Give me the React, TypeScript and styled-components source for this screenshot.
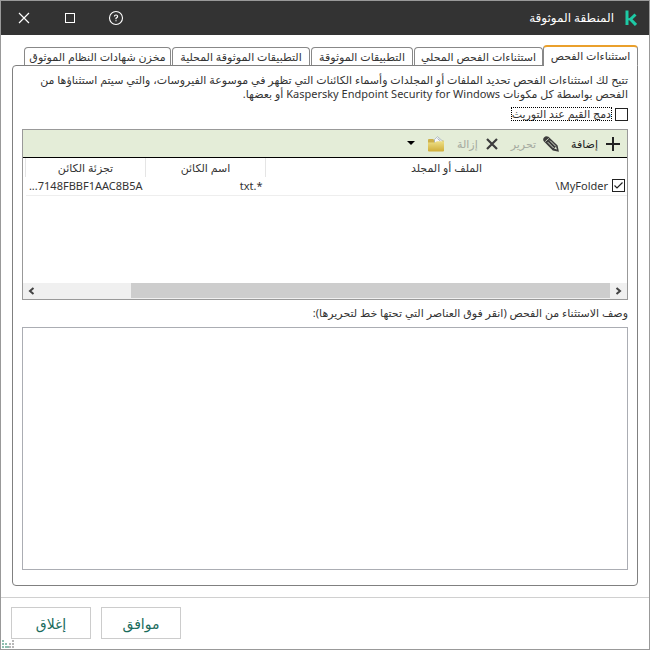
import React, { useState } from "react";
import styled, { createGlobalStyle } from "styled-components";

const GlobalStyle = createGlobalStyle`
  * { box-sizing: border-box; }
  body { margin: 0; background: #fff; }
  body, button, input, textarea, table {
    font-family: "Noto Sans", "DejaVu Sans", sans-serif;
    font-size: 11px;
    color: #333;
  }
  button { padding: 0; border: 0; background: none; cursor: pointer; }
`;

const Window = styled.div`
  position: relative;
  display: flex;
  flex-direction: column;
  min-height: 100vh;
  border: 1px solid #999;
  background: #fff;
`;

const TitleBar = styled.header`
  display: flex;
  align-items: center;
  height: 34px;
  padding: 0 12px 0 14px;
  background: #333;
  color: #fff;
`;

const Title = styled.h1`
  margin: 0;
  margin-inline: 11px auto;
  font-size: 12px;
  font-weight: 400;
  line-height: 18px;
`;

const WindowButtons = styled.div`
  display: flex;
  gap: 28px;
`;

const WindowButton = styled.button`
  display: flex;
  width: 18px;
  height: 18px;
`;

const Body = styled.main`
  display: flex;
  flex: 1;
  flex-direction: column;
  padding: 10px 11px 11px;
`;

const Tabs = styled.div`
  display: flex;
  align-items: flex-end;
  height: 20px;
`;

const Tab = styled.button<{ $active?: boolean; $basis: number }>`
  flex: 0 1 ${(p) => p.$basis}px;
  height: ${(p) => (p.$active ? 20 : 18)}px;
  margin-inline-end: ${(p) => (p.$active ? 0 : 1)}px;
  border: 1px solid #888;
  border-top: ${(p) => (p.$active ? "2px solid #eaa02c" : "1px solid #888")};
  border-bottom: 0;
  border-radius: 4px 4px 0 0;
  background: #fff;
  line-height: 16px;
  white-space: nowrap;
`;

const Panel = styled.section`
  position: relative;
  display: flex;
  flex: 1;
  flex-direction: column;
  padding: 7px 9px 15px;
  border: 1px solid #808080;
  border-radius: 4px;
  border-start-start-radius: 0;
  &::before {
    content: "";
    position: absolute;
    top: -1px;
    inset-inline-start: 0;
    width: 93px;
    height: 1px;
    background: #fff;
  }
`;

const Intro = styled.p`
  margin: 0;
  line-height: 14px;
`;

const CheckLabel = styled.label`
  display: flex;
  align-items: center;
  gap: 4px;
  height: 14px;
  margin: 6px 0 8px;
  span {
    outline: 1px dotted #000;
    line-height: 12px;
  }
`;

const Checkbox = styled.input.attrs({ type: "checkbox" })`
  appearance: none;
  display: block;
  flex: none;
  width: 13px;
  height: 13px;
  margin: 0;
  border: 1px solid #222;
  background: #fff;
  &:checked {
    background: #fff
      url("data:image/svg+xml,%3Csvg xmlns='http://www.w3.org/2000/svg' viewBox='0 0 11 11'%3E%3Cpath d='M1.5 5.5L4 8L9.5 2.5' fill='none' stroke='%23222' stroke-width='1.2'/%3E%3C/svg%3E");
  }
`;

const ListBox = styled.div`
  display: flex;
  flex-direction: column;
  height: 171px;
  border: 1px solid #999;
`;

const Toolbar = styled.div`
  display: flex;
  flex: none;
  align-items: center;
  gap: 12px;
  height: 28px;
  padding: 0 6px;
  border-bottom: 1px solid #000;
  background: #e4edd8;
`;

const Tool = styled.button`
  display: flex;
  align-items: center;
  gap: 7px;
  color: #222;
  line-height: 16px;
  &:disabled { color: #a5aaa0; }
  svg { display: block; flex: none; }
`;

const TableArea = styled.div`
  flex: 1;
  padding-inline-end: 2px;
`;

const Table = styled.table`
  width: 100%;
  border-collapse: collapse;
  table-layout: fixed;
`;

const HeadCell = styled.th<{ $width?: number }>`
  width: ${(p) => (p.$width ? `${p.$width}px` : "auto")};
  height: 19px;
  padding: 0;
  border-inline-end: 1px solid #e5e5e5;
  font-weight: 400;
  text-align: center;
`;

const Cell = styled.td`
  height: 18px;
  padding: 0 3px;
  border-bottom: 1px solid #eee;
  white-space: nowrap;
  &:first-child { padding-inline-start: 2px; }
`;

const RowLabel = styled.label`
  display: flex;
  align-items: center;
  gap: 4px;
  line-height: 16px;
`;

const ScrollBar = styled.div`
  display: flex;
  flex: none;
  height: 16px;
  background: #f0f0f0;
`;

const ScrollButton = styled.button`
  display: flex;
  align-items: center;
  justify-content: center;
  width: 17px;
`;

const ScrollTrack = styled.div`
  flex: 1;
`;

const ScrollThumb = styled.div`
  width: 84%;
  height: 15px;
  background: #cdcdcd;
`;

const DetailLabel = styled.label`
  margin: 5px 0 6px;
  line-height: 16px;
`;

const Detail = styled.textarea`
  flex: 1;
  width: 100%;
  border: 1px solid #abadb3;
  outline: 0;
  resize: none;
`;

const Footer = styled.footer`
  display: flex;
  justify-content: flex-end;
  gap: 10px;
  padding: 9px 10px 10px;
  border-top: 1px solid #d0d0d0;
`;

const FooterButton = styled.button`
  width: 80px;
  height: 32px;
  border: 1px solid #ccc;
  color: #1a6b5c;
  font-size: 14px;
`;

const Grip = styled.svg`
  position: absolute;
  left: 1px;
  bottom: 1px;
`;

const tabs = [
  { name: "استثناءات الفحص", basis: 95 },
  { name: "استثناءات الفحص المحلي", basis: 129 },
  { name: "التطبيقات الموثوقة", basis: 102 },
  { name: "التطبيقات الموثوقة المحلية", basis: 138 },
  { name: "مخزن شهادات النظام الموثوق", basis: 147 },
];

const gripDots = [
  [0, 0], [0, 3], [3, 3], [10, 0], [7, 3], [10, 3], [0, 6], [3, 6], [5, 6], [7, 6], [10, 6],
];

export default function App() {
  const [active, setActive] = useState(0);
  return (
    <>
      <GlobalStyle />
      <Window dir="rtl" lang="ar">
        <TitleBar>
          <svg width="12" height="16" viewBox="0 0 12 16" fill="none" stroke="#1dcaa5">
            <path d="M2 0.5v14.5" strokeWidth="3" />
            <path d="M10.5 4.5L5.5 9.2L11 15" strokeWidth="3" />
            <path d="M3 9.2h3" strokeWidth="2" />
          </svg>
          <Title>المنطقة الموثوقة</Title>
          <WindowButtons>
            <WindowButton aria-label="مساعدة">
              <svg width="18" height="18" viewBox="0 0 18 18" fill="none" stroke="#fff">
                <circle cx="9" cy="9" r="6.5" strokeWidth="1.1" />
                <path d="M7.4 7.6Q7.4 6 9 6T10.6 7.4Q10.6 8.2 9 9.2V10.2M9 11.2V12.3" strokeWidth="1.2" />
              </svg>
            </WindowButton>
            <WindowButton aria-label="تكبير">
              <svg width="18" height="18" viewBox="0 0 18 18" fill="none" stroke="#fff">
                <rect x="4.5" y="4.5" width="9" height="9" />
              </svg>
            </WindowButton>
            <WindowButton aria-label="إغلاق النافذة">
              <svg width="18" height="18" viewBox="0 0 18 18" fill="none" stroke="#fff">
                <path d="M4 4L14 14M14 4L4 14" strokeWidth="1.2" />
              </svg>
            </WindowButton>
          </WindowButtons>
        </TitleBar>
        <Body>
          <Tabs role="tablist">
            {tabs.map((t, i) => (
              <Tab
                key={t.name}
                role="tab"
                aria-selected={i === active}
                $active={i === active}
                $basis={t.basis}
                onClick={() => setActive(i)}
              >
                {t.name}
              </Tab>
            ))}
          </Tabs>
          <Panel role="tabpanel">
            <Intro>
              تتيح لك استثناءات الفحص تحديد الملفات أو المجلدات وأسماء الكائنات التي تظهر في موسوعة الفيروسات، والتي سيتم استثناؤها من الفحص بواسطة كل مكونات Kaspersky Endpoint Security for Windows أو بعضها.
            </Intro>
            <CheckLabel>
              <Checkbox />
              <span>دمج القيم عند التوريث</span>
            </CheckLabel>
            <ListBox>
              <Toolbar>
                <Tool>
                  <svg width="16" height="16" viewBox="0 0 16 16" stroke="#222" strokeWidth="2">
                    <path d="M8 1v14M1 8h14" />
                  </svg>
                  إضافة
                </Tool>
                <Tool disabled>
                  <svg width="16" height="16" viewBox="0 0 16 16">
                    <path d="M1 1.5Q3-.8 5.5 .8L14.6 9.5L15.9 15.8L9.8 14.6L1.2 5.8Q-.8 3.5 1 1.5Z" fill="#3c3c3c" />
                    <path d="M2.2 5.6L5.8 2.4" stroke="#e4edd8" strokeWidth=".8" />
                    <path d="M4.8 6.2L10.6 12M7 4.6L12.8 10.4" stroke="#e4edd8" strokeWidth=".9" />
                    <path d="M11 12.4L13 10.8L14 13.6Z" fill="#e4edd8" />
                  </svg>
                  تحرير
                </Tool>
                <Tool disabled>
                  <svg width="14" height="14" viewBox="0 0 14 14" stroke="#3c3c3c" strokeWidth="2.2">
                    <path d="M2 2L12 12M12 2L2 12" />
                  </svg>
                  إزالة
                </Tool>
                <Tool aria-label="استيراد وتصدير">
                  <svg width="18" height="16" viewBox="0 0 18 16">
                    <defs>
                      <linearGradient id="folder" x1="0" y1="0" x2="0" y2="1">
                        <stop offset="0" stopColor="#eee087" />
                        <stop offset="1" stopColor="#cfad38" />
                      </linearGradient>
                    </defs>
                    <path d="M1 4Q1 3 2 3H6L8 4.5H16Q17 4.5 17 5.5V15H1Z" fill="#cdb04a" />
                    <path d="M7.5 3.5L10.5 .6L15.5 5V7H7.5Z" fill="#f6f8fa" stroke="#9aa7b0" strokeWidth=".7" />
                    <path d="M10.5 2.5L13.5 5" stroke="#8896a4" strokeWidth=".8" />
                    <path d="M1 6.5H8L9.8 5.2H17V14.5Q17 15.5 16 15.5H2Q1 15.5 1 14.5Z" fill="url(#folder)" />
                  </svg>
                </Tool>
                <Tool aria-label="المزيد">
                  <svg width="8" height="5" viewBox="0 0 8 5">
                    <path d="M0 0H8L4 4Z" fill="#000" />
                  </svg>
                </Tool>
              </Toolbar>
              <TableArea>
                <Table>
                  <thead>
                    <tr>
                      <HeadCell scope="col">الملف أو المجلد</HeadCell>
                      <HeadCell scope="col" $width={120}>اسم الكائن</HeadCell>
                      <HeadCell scope="col" $width={120}>تجزئة الكائن</HeadCell>
                    </tr>
                  </thead>
                  <tbody>
                    <tr>
                      <Cell>
                        <RowLabel>
                          <Checkbox defaultChecked />
                          <span>MyFolder\</span>
                        </RowLabel>
                      </Cell>
                      <Cell>*.txt</Cell>
                      <Cell>7148FBBF1AAC8B5A...</Cell>
                    </tr>
                  </tbody>
                </Table>
              </TableArea>
              <ScrollBar>
                <ScrollButton aria-label="تمرير لليمين">
                  <svg width="7" height="8" viewBox="0 0 7 8" fill="none" stroke="#444" strokeWidth="2">
                    <path d="M1.5 1L5 4L1.5 7" />
                  </svg>
                </ScrollButton>
                <ScrollTrack>
                  <ScrollThumb />
                </ScrollTrack>
                <ScrollButton aria-label="تمرير لليسار">
                  <svg width="7" height="8" viewBox="0 0 7 8" fill="none" stroke="#444" strokeWidth="2">
                    <path d="M5.5 1L2 4L5.5 7" />
                  </svg>
                </ScrollButton>
              </ScrollBar>
            </ListBox>
            <DetailLabel htmlFor="detail">
              وصف الاستثناء من الفحص (انقر فوق العناصر التي تحتها خط لتحريرها):
            </DetailLabel>
            <Detail id="detail" readOnly />
          </Panel>
        </Body>
        <Footer>
          <FooterButton>موافق</FooterButton>
          <FooterButton>إغلاق</FooterButton>
        </Footer>
        <Grip width="13" height="8" viewBox="0 0 13 8">
          {gripDots.map(([x, y], i) => (
            <rect key={i} x={x} y={y} width="2" height="2" fill={x > 6 ? "#b8b8b8" : "#8fbfb0"} />
          ))}
        </Grip>
      </Window>
    </>
  );
}
